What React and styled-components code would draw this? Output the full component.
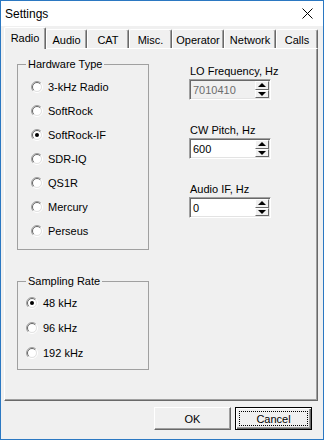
import React from 'react'
import styled, { createGlobalStyle, css } from 'styled-components'

const GlobalStyle = createGlobalStyle`
  body {
    margin: 0;
    font-family: "Liberation Sans", Arial, sans-serif;
    font-size: 11px;
    color: #000;
    background: #fff;
  }
`

const Window = styled.div`
  width: 324px;
  height: 440px;
  box-sizing: border-box;
  border: 1px solid #2b78c2;
  display: flex;
  flex-direction: column;
  background: #f0f0f0;
`

const TitleBar = styled.div`
  height: 25px;
  background: #fff;
  display: flex;
  align-items: center;
  justify-content: space-between;
  padding: 0 10px 0 4px;
  font-size: 12px;
`

const Body = styled.div`
  flex: 1;
  display: flex;
  flex-direction: column;
  padding: 1px 5px 0 3px;
`

const TabStrip = styled.div`
  display: flex;
  align-items: flex-end;
  height: 21px;
`

const Tab = styled.div`
  box-sizing: border-box;
  width: ${(p) => p.$w}px;
  height: 19px;
  display: flex;
  align-items: center;
  justify-content: center;
  background: #f0f0f0;
  border-top: 1px solid #fff;
  border-left: 1px solid #fff;
  border-right: 1px solid #696969;
  box-shadow: inset -1px 0 0 #a0a0a0;
  border-radius: 2px 2px 0 0;
  padding-top: 1px;
  ${(p) =>
    p.$active &&
    css`
      height: 22px;
      margin-bottom: -1px;
      position: relative;
      z-index: 2;
      padding-bottom: 2px;
    `}
`

const Panel = styled.div`
  box-sizing: border-box;
  width: 314px;
  height: 353px;
  display: flex;
  padding: 9px 0 0 12px;
  border-top: 1px solid #fff;
  border-left: 1px solid #fff;
  border-right: 1px solid #696969;
  border-bottom: 1px solid #696969;
  box-shadow: inset -1px -1px 0 #a0a0a0;
`

const LeftColumn = styled.div`
  display: flex;
  flex-direction: column;
  width: 132px;
`

const GroupBox = styled.fieldset`
  box-sizing: border-box;
  width: 132px;
  margin: ${(p) => p.$top || 0}px 0 0 0;
  padding: 0;
  min-width: 0;
  border: 1px solid #a0a0a0;
`

const Legend = styled.legend`
  margin-left: 8px;
  padding: 0 2px;
  line-height: 13px;
  font-size: 11px;
`

const RadioList = styled.div`
  display: flex;
  flex-direction: column;
  padding: ${(p) => p.$pt}px 0 ${(p) => p.$pb}px ${(p) => p.$pl}px;
`

const RadioRow = styled.div`
  height: ${(p) => p.$h}px;
  display: flex;
  align-items: center;
  gap: 5px;
`

const RightColumn = styled.div`
  margin-left: 40px;
  padding-top: 7px;
  display: flex;
  flex-direction: column;
`

const Field = styled.div`
  display: flex;
  flex-direction: column;
  margin-bottom: 24px;
`

const FieldLabel = styled.div`
  line-height: 13px;
  padding-left: 1px;
  margin-bottom: 1px;
`

const SpinEdit = styled.div`
  box-sizing: border-box;
  width: 82px;
  height: 21px;
  display: flex;
  align-items: center;
  padding: 0 1px 0 2px;
  border: 1px solid;
  border-color: #a0a0a0 #fff #fff #a0a0a0;
  box-shadow: inset 1px 1px 0 #696969, inset -1px -1px 0 #e3e3e3;
  background: ${(p) => (p.$disabled ? '#f0f0f0' : '#fff')};
  color: ${(p) => (p.$disabled ? '#6d6d6d' : '#000')};
`

const SpinValue = styled.span`
  flex: 1;
  padding-left: 1px;
`

const Spinner = styled.div`
  width: 14px;
  height: 17px;
  display: flex;
  flex-direction: column;
`

const SpinHalf = styled.div`
  flex: 1;
  box-sizing: border-box;
  display: flex;
  align-items: center;
  justify-content: center;
  background: #f0f0f0;
  border: 1px solid;
  border-color: #fff #696969 #696969 #fff;
`

const Arrow = styled.span`
  width: 0;
  height: 0;
  border-left: 4px solid transparent;
  border-right: 4px solid transparent;
  ${(p) =>
    p.$down
      ? css`border-top: 4px solid #000;`
      : css`border-bottom: 4px solid #000;`}
`

const ButtonBar = styled.div`
  display: flex;
  justify-content: flex-end;
  gap: 4px;
  margin-top: 6px;
  padding-right: 6px;
`

const Button = styled.div`
  position: relative;
  box-sizing: border-box;
  width: 77px;
  height: 23px;
  display: flex;
  align-items: center;
  justify-content: center;
  background: #f0f0f0;
  border: 1px solid;
  border-color: #fff #696969 #696969 #fff;
  box-shadow: inset -1px -1px 0 #a0a0a0;
  ${(p) =>
    p.$default &&
    css`
      border-color: #000;
      box-shadow: inset 1px 1px 0 #fff, inset -1px -1px 0 #696969,
        inset -2px -2px 0 #a0a0a0;
      &::after {
        content: '';
        position: absolute;
        inset: 3px;
        border: 1px dotted #000;
      }
    `}
`

const RadioIcon = ({ checked }) => (
  <svg width="12" height="12" viewBox="0 0 12 12">
    <circle cx="6" cy="6" r="4" fill="#fff" />
    <path d="M9.9 2.1 A5.5 5.5 0 0 0 2.1 9.9" fill="none" stroke="#a0a0a0" />
    <path d="M2.1 9.9 A5.5 5.5 0 0 0 9.9 2.1" fill="none" stroke="#fff" />
    <path d="M9.2 2.8 A4.5 4.5 0 0 0 2.8 9.2" fill="none" stroke="#696969" />
    <path d="M2.8 9.2 A4.5 4.5 0 0 0 9.2 2.8" fill="none" stroke="#e3e3e3" />
    {checked && <circle cx="6" cy="6" r="2" fill="#000" />}
  </svg>
)

const CloseIcon = () => (
  <svg width="11" height="11" viewBox="0 0 11 11">
    <path d="M0.5 0.5 L10.5 10.5 M10.5 0.5 L0.5 10.5" stroke="#000" strokeWidth="1" />
  </svg>
)

const tabs = [
  { label: 'Radio', w: 42, active: true },
  { label: 'Audio', w: 41 },
  { label: 'CAT', w: 42 },
  { label: 'Misc.', w: 43 },
  { label: 'Operator', w: 52 },
  { label: 'Network', w: 52 },
  { label: 'Calls', w: 42 },
]

const hardware = ['3-kHz Radio', 'SoftRock', 'SoftRock-IF', 'SDR-IQ', 'QS1R', 'Mercury', 'Perseus']
const rates = ['48 kHz', '96 kHz', '192 kHz']

const fields = [
  { label: 'LO Frequency, Hz', value: '7010410', disabled: true },
  { label: 'CW Pitch, Hz', value: '600' },
  { label: 'Audio IF, Hz', value: '0' },
]

const App = () => {
  return (
    <>
      <GlobalStyle />
      <Window>
        <TitleBar>
          <span>Settings</span>
          <CloseIcon />
        </TitleBar>
        <Body>
          <TabStrip>
            {tabs.map((t) => (
              <Tab key={t.label} $w={t.w} $active={t.active}>
                {t.label}
              </Tab>
            ))}
          </TabStrip>
          <Panel>
            <LeftColumn>
              <GroupBox>
                <Legend>Hardware Type</Legend>
                <RadioList $pt={4} $pb={6} $pl={13}>
                  {hardware.map((h) => (
                    <RadioRow key={h} $h={24}>
                      <RadioIcon checked={h === 'SoftRock-IF'} />
                      <span>{h}</span>
                    </RadioRow>
                  ))}
                </RadioList>
              </GroupBox>
              <GroupBox $top={25}>
                <Legend>Sampling Rate</Legend>
                <RadioList $pt={2} $pb={4} $pl={8}>
                  {rates.map((r) => (
                    <RadioRow key={r} $h={25}>
                      <RadioIcon checked={r === '48 kHz'} />
                      <span>{r}</span>
                    </RadioRow>
                  ))}
                </RadioList>
              </GroupBox>
            </LeftColumn>
            <RightColumn>
              {fields.map((f) => (
                <Field key={f.label}>
                  <FieldLabel>{f.label}</FieldLabel>
                  <SpinEdit $disabled={f.disabled}>
                    <SpinValue>{f.value}</SpinValue>
                    <Spinner>
                      <SpinHalf>
                        <Arrow />
                      </SpinHalf>
                      <SpinHalf>
                        <Arrow $down />
                      </SpinHalf>
                    </Spinner>
                  </SpinEdit>
                </Field>
              ))}
            </RightColumn>
          </Panel>
          <ButtonBar>
            <Button>OK</Button>
            <Button $default>Cancel</Button>
          </ButtonBar>
        </Body>
      </Window>
    </>
  )
}

export default App
